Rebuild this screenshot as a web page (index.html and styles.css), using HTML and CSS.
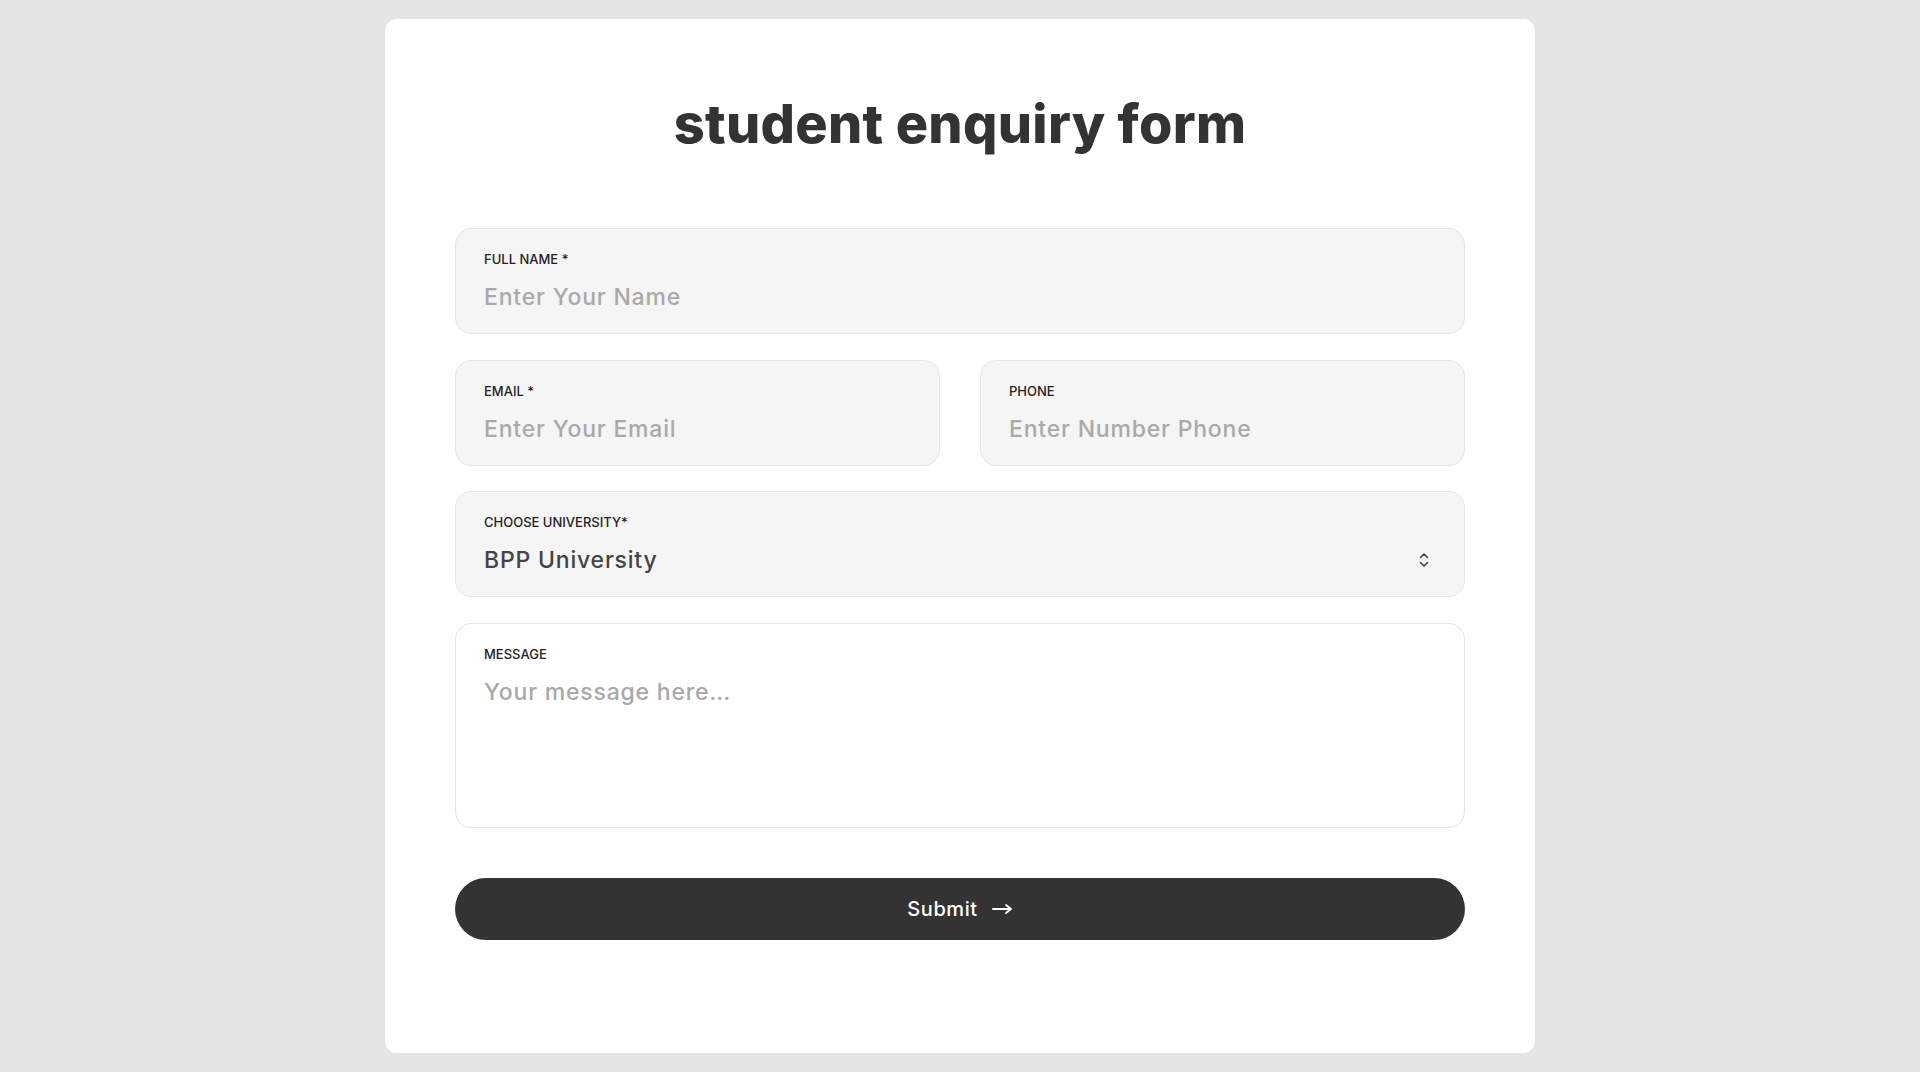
FILE: index.html
```html
<!DOCTYPE html>
<html lang="en">
<head>
<meta charset="utf-8">
<title>Student Enquiry Form</title>
<link rel="stylesheet" href="styles.css">
</head>
<body>
<main class="card">
  <h1 class="title">student enquiry form</h1>
  <form class="form">
    <div class="field">
      <label class="label">FULL NAME *</label>
      <div class="value placeholder">Enter Your Name</div>
    </div>
    <div class="row">
      <div class="field">
        <label class="label">EMAIL *</label>
        <div class="value placeholder">Enter Your Email</div>
      </div>
      <div class="field">
        <label class="label">PHONE</label>
        <div class="value placeholder">Enter Number Phone</div>
      </div>
    </div>
    <div class="field select">
      <label class="label">CHOOSE UNIVERSITY*</label>
      <div class="select-row">
        <div class="value">BPP University</div>
        <svg class="chev" width="10" height="16" viewBox="0 0 10 16"><path d="M1.5 5.5 L5 2 L8.5 5.5 M1.5 10.5 L5 14 L8.5 10.5" fill="none" stroke="#3a4250" stroke-width="1.6" stroke-linecap="round" stroke-linejoin="round"/></svg>
      </div>
    </div>
    <div class="field message">
      <label class="label">MESSAGE</label>
      <div class="value placeholder">Your message here<span class="dots">...</span></div>
    </div>
    <button type="button" class="submit">Submit
      <svg class="arrow" width="21" height="12" viewBox="0 0 21 12"><path d="M1 6 H18 M14 2 L19 6 L14 10" fill="none" stroke="#fff" stroke-width="2" stroke-linecap="round" stroke-linejoin="round"/></svg>
    </button>
  </form>
</main>
</body>
</html>
```

FILE: styles.css
```css
* { box-sizing: border-box; }
html, body { margin: 0; padding: 0; }
body {
  background: #e5e5e5;
  font-family: Inter, "Open Sans", "Liberation Sans", sans-serif;
  color: #333;
  padding-top: 19px;
  height: 1072px;
  overflow: hidden;
}
.card {
  width: 1150px;
  height: 1034px;
  margin: 0 auto;
  background: #fff;
  border-radius: 12px;
  padding: 0 70px;
}
.title {
  margin: 0;
  padding-top: 74px;
  height: 209px;
  text-align: center;
  font-size: 54px;
  line-height: 62px;
  font-weight: 800;
  color: #333;
  letter-spacing: 0.3px;
}
.form {
  display: flex;
  flex-direction: column;
  gap: 25.5px;
}
.row {
  display: grid;
  grid-template-columns: 1fr 1fr;
  gap: 40px;
}
.field {
  background: #f5f5f5;
  border: 1px solid #e6e6e6;
  border-radius: 16px;
  height: 106px;
  padding: 22px 28px 0;
  display: flex;
  flex-direction: column;
}
.label {
  font-size: 13px;
  line-height: 16px;
  font-weight: 500;
  color: #222;
}
.value {
  margin-top: 15px;
  font-size: 23px;
  line-height: 30px;
  font-weight: 500;
  letter-spacing: 0.8px;
  color: #444;
}
.placeholder { color: #a9a9a9; }
.dots { letter-spacing: 0; }
.select-row {
  display: flex;
  align-items: center;
  justify-content: space-between;
  padding-right: 7px;
}
.select-row .value { color: #444; }
.chev { margin-top: 15px; }
.message {
  background: #fff;
  height: 205px;
  padding-top: 22px;
}
.submit {
  margin-top: 25px;
  height: 62px;
  border: 0;
  border-radius: 31px;
  background: #333;
  color: #fff;
  font-family: inherit;
  font-size: 20px;
  font-weight: 500;
  letter-spacing: 0.6px;
  display: flex;
  align-items: center;
  justify-content: center;
  gap: 14px;
  cursor: pointer;
}
```
